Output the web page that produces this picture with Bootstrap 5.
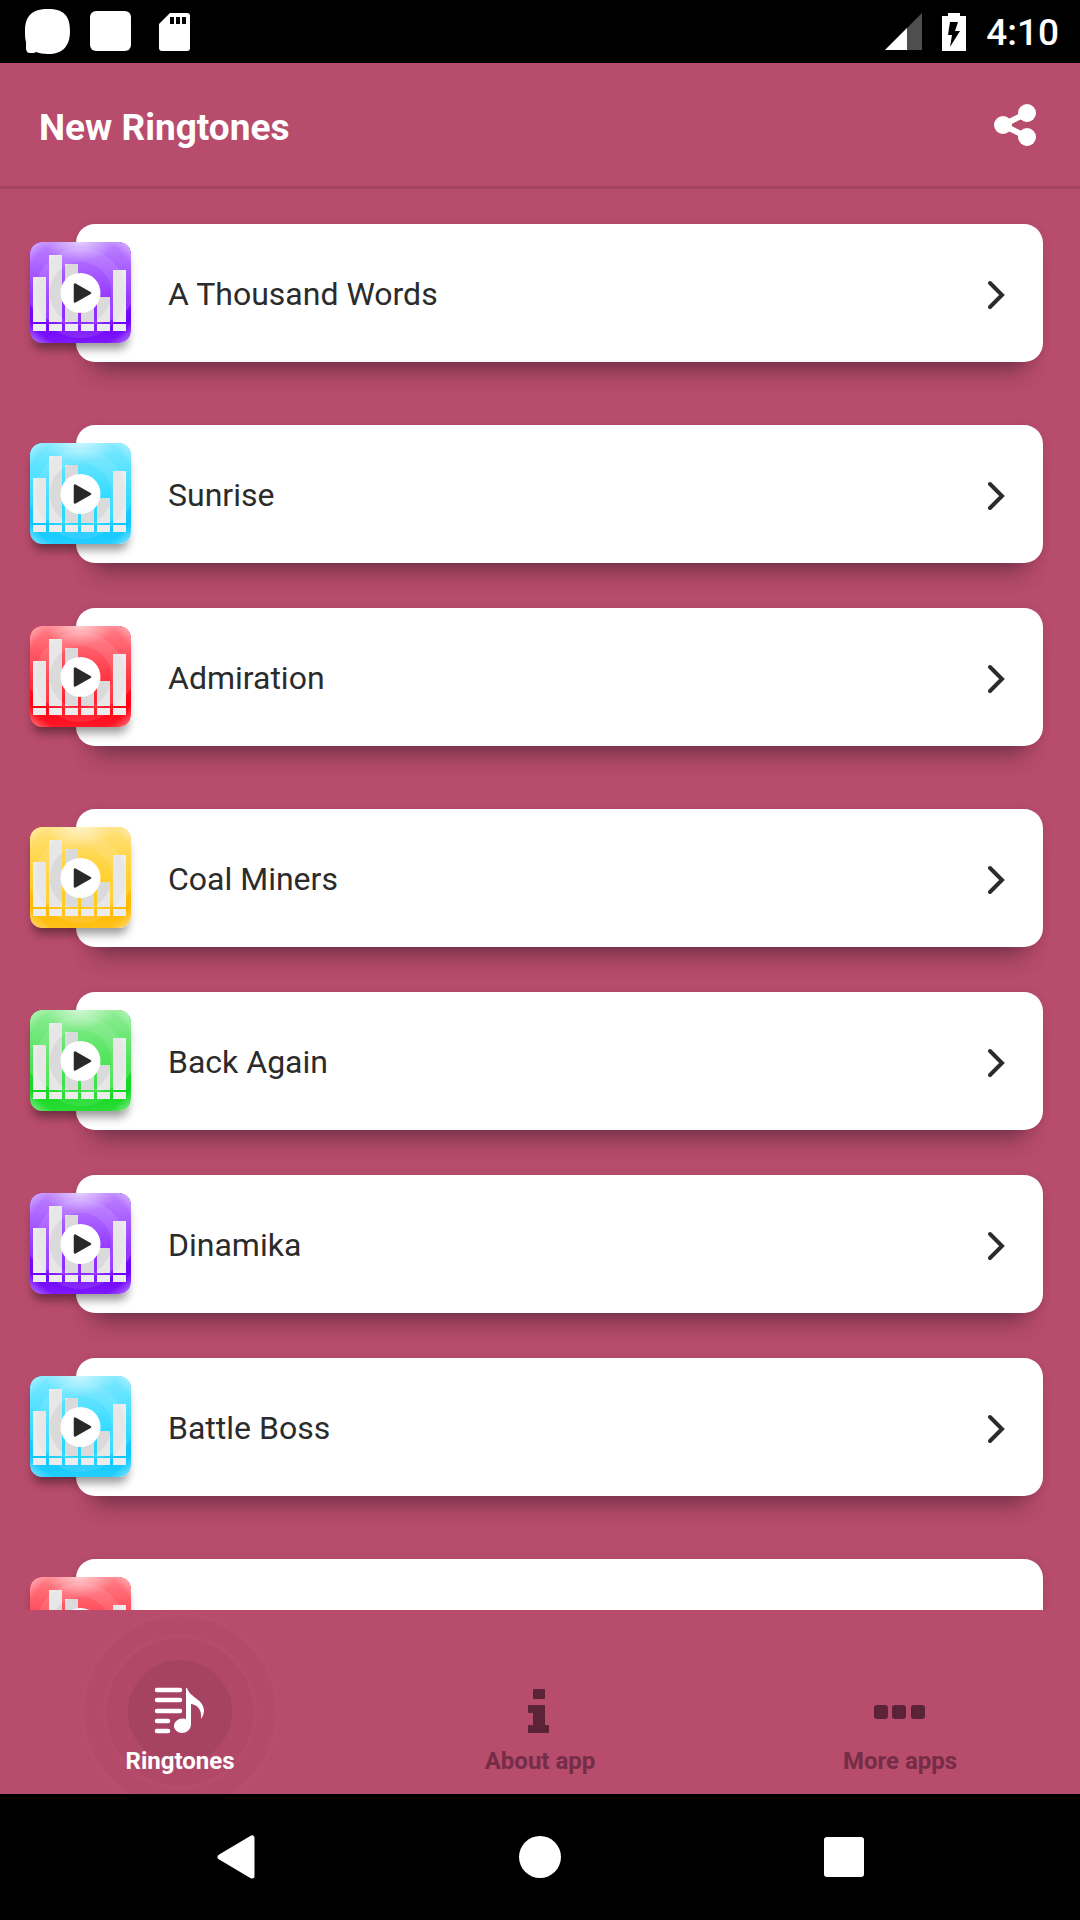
<!DOCTYPE html>
<html lang="en">
<head>
<meta charset="utf-8">
<meta name="viewport" content="width=device-width, initial-scale=1">
<title>New Ringtones</title>
<link href="https://cdn.jsdelivr.net/npm/bootstrap@5.3.0/dist/css/bootstrap.min.css" rel="stylesheet">
<style>
  :root { --rose: #b74c6c; --ink: #2b2b2b; }
  body { font-family: Roboto, "Liberation Sans", sans-serif; background: var(--rose); color: var(--ink); }
  svg { display: block; flex: none; }
  .status-bar { height: 63px; padding: 0 21px 0 25px; }
  .status-left { gap: 20px; }
  .status-right { gap: 20px; }
  .clock { font-size: 37px; line-height: 40px; font-weight: 500; padding-top: 3px; }
  .app-header { height: 126px; padding: 0 37px 0 39px; border-bottom: 3px solid #a64362; }
  .app-title { font-size: 37px; line-height: 44px; font-weight: 700; padding-top: 6px; }
  .tone-list { padding: 35px 37px 0 76px; }
  .tone-row { margin-bottom: 45px; }
  .tone-row.section-end { margin-bottom: 63px; }
  .tone-link { height: 138px; border-radius: 19px; color: var(--ink); padding-right: 37px;
    box-shadow: 0 26px 22px -18px rgba(40, 20, 30, .45), 0 2px 10px rgba(60, 20, 35, .1); }
  .tone-tile { width: 101px; height: 101px; margin: 0 37px 2px -46px; border-radius: 12px;
    box-shadow: 0 9px 10px -3px rgba(0, 0, 0, .4); }
  .tone-name { font-size: 32px; line-height: 40px; padding-top: 2px; }
  .chevron { margin-top: 4px; }
  .violet { --base: #8c28ff; --deep: #7000fb; }
  .cyan { --base: #20d8ff; --deep: #0cc8ff; }
  .red { --base: #ff2030; --deep: #ff0010; }
  .yellow { --base: #ffcb18; --deep: #ffba00; }
  .green { --base: #3ce048; --deep: #12d820; }
  .tab-bar { height: 184px; }
  .tab-link { padding-top: 76px; color: #752d47; }
  .tab-link.active { color: #fff; }
  .tab-icon { width: 52px; height: 48px; color: #5a2338; }
  .active .tab-icon { color: #fff; }
  .tab-text { font-size: 24px; line-height: 28px; font-weight: 700; margin-top: 13px; }
  .ripple { left: 50%; top: 0; transform: translateX(-50%); }
  .system-nav { height: 126px; padding: 0 84px; }
</style>
<script src="https://cdn.jsdelivr.net/npm/bootstrap@5.3.0/dist/js/bootstrap.bundle.min.js"></script>
</head>
<body>
<svg width="0" height="0" class="position-absolute" aria-hidden="true">
  <defs>
    <linearGradient id="sheen" x1="0" y1="0" x2="0" y2="1">
      <stop offset="0" stop-color="#fff" stop-opacity=".42"/>
      <stop offset=".55" stop-color="#fff" stop-opacity=".08"/>
      <stop offset=".8" stop-color="#fff" stop-opacity="0"/>
      <stop offset="1" stop-color="#fff" stop-opacity=".1"/>
    </linearGradient>
    <radialGradient id="glow">
      <stop offset="0" stop-color="#fff" stop-opacity=".6"/>
      <stop offset="1" stop-color="#fff" stop-opacity="0"/>
    </radialGradient>
    <radialGradient id="edge" cx=".5" cy=".5" r=".72">
      <stop offset=".78" stop-color="#fff" stop-opacity="0"/>
      <stop offset="1" stop-color="#fff" stop-opacity=".5"/>
    </radialGradient>
    <clipPath id="tile-clip"><rect width="101" height="101" rx="12"/></clipPath>
    <clipPath id="bars-clip"><path d="M3 35h13v45H3zM19 13h13v67H19zM35 22h13v58H35zM51 48h13v32H51zM67 55h13v25H67zM83 28h13v52H83z"/></clipPath>
    <symbol id="tile" viewBox="0 0 101 101">
      <g clip-path="url(#tile-clip)">
        <rect width="101" height="101" fill="var(--deep)"/>
        <path d="M0 0H101V62C94 76 75 83 50.500 83S7 76 0 62Z" fill="var(--base)"/>
        <rect width="101" height="101" fill="url(#sheen)"/>
        <circle cx="50.500" cy="51" r="38" fill="none" stroke="#fff" stroke-width="14" opacity=".1"/>
        <path d="M3 35h13v45H3zM19 13h13v67H19zM35 22h13v58H35zM51 48h13v32H51zM67 55h13v25H67zM83 28h13v52H83zM3 82h13v7H3zM19 82h13v7H19zM35 82h13v7H35zM51 82h13v7H51zM67 82h13v7H67zM83 82h13v7H83z" fill="#ececec"/>
        <g clip-path="url(#bars-clip)" fill="#777">
          <circle cx="50.500" cy="51" r="45" opacity=".04"/>
          <circle cx="50.500" cy="51" r="31" opacity=".11"/>
        </g>
        <rect width="101" height="101" fill="url(#edge)"/>
        <ellipse cx="50" cy="0" rx="36" ry="19" fill="url(#glow)"/>
      </g>
      <circle cx="50.500" cy="51" r="20" fill="#fff"/>
      <path d="M45 42.500V59.500L60 51Z" fill="#292929" stroke="#292929" stroke-width="2.500" stroke-linejoin="round"/>
    </symbol>
    <symbol id="next" viewBox="0 0 20 30">
      <path d="M4 3L16 15L4 27" fill="none" stroke="#2b2b2b" stroke-width="4" stroke-linecap="round"/>
    </symbol>
  </defs>
</svg>

<div class="vh-100 d-flex flex-column overflow-hidden">
  <div class="status-bar bg-black text-white d-flex align-items-center justify-content-between flex-shrink-0">
    <div class="status-left d-flex align-items-center">
      <svg width="45" height="45" viewBox="0 0 45 45" fill="#fff"><path d="M23 0C39 0 45 7 45 22S38 45 23 45C18 45 14 44 11 43L9 44H5Q1 44 1 39V33C0 30 0 26 0 22C0 7 7 0 23 0Z"/></svg>
      <svg width="41" height="41" viewBox="0 0 41 41" fill="#fff"><rect width="41" height="40" rx="6"/></svg>
      <svg class="ms-2" width="31" height="38" viewBox="0 0 31 38"><path d="M11 0H28Q31 0 31 3V35Q31 38 28 38H3Q0 38 0 35V11Z" fill="#fff"/><path d="M11 4h4v7h-4zM17 4h4v7h-4zM23 4h4v7h-4z"/></svg>
    </div>
    <div class="status-right d-flex align-items-center">
      <svg width="37" height="37" viewBox="0 0 37 37"><path d="M37 0V37H0Z" fill="#4e4e4e"/><path d="M22 15V37H0Z" fill="#fff"/></svg>
      <svg width="24" height="38" viewBox="0 0 24 38"><path d="M6 0H18V3H24V38H0V3H6Z" fill="#fff"/><path d="M8 9H16L13 18H18L8 34L10 22H6Z" fill="#000"/></svg>
      <span class="clock">4:10</span>
    </div>
  </div>

  <header class="app-header d-flex align-items-center justify-content-between flex-shrink-0">
    <h1 class="app-title text-white m-0">New Ringtones</h1>
    <button type="button" class="btn p-0 border-0" aria-label="Share">
      <svg width="56" height="42" viewBox="-7 0 56 42" fill="#fff"><path d="M33 9L9 21L33 33" fill="none" stroke="#fff" stroke-width="6"/><circle cx="9" cy="21" r="9"/><circle cx="33" cy="9" r="9"/><circle cx="33" cy="33" r="9"/></svg>
    </button>
  </header>

  <main class="flex-fill overflow-hidden">
    <ul class="tone-list list-unstyled m-0">
      <li class="tone-row section-end"><a href="#" class="tone-link bg-white d-flex align-items-center text-decoration-none"><svg class="tone-tile violet"><use href="#tile"/></svg><span class="tone-name flex-fill">A Thousand Words</span><svg class="chevron" width="20" height="30"><use href="#next"/></svg></a></li>
      <li class="tone-row"><a href="#" class="tone-link bg-white d-flex align-items-center text-decoration-none"><svg class="tone-tile cyan"><use href="#tile"/></svg><span class="tone-name flex-fill">Sunrise</span><svg class="chevron" width="20" height="30"><use href="#next"/></svg></a></li>
      <li class="tone-row section-end"><a href="#" class="tone-link bg-white d-flex align-items-center text-decoration-none"><svg class="tone-tile red"><use href="#tile"/></svg><span class="tone-name flex-fill">Admiration</span><svg class="chevron" width="20" height="30"><use href="#next"/></svg></a></li>
      <li class="tone-row"><a href="#" class="tone-link bg-white d-flex align-items-center text-decoration-none"><svg class="tone-tile yellow"><use href="#tile"/></svg><span class="tone-name flex-fill">Coal Miners</span><svg class="chevron" width="20" height="30"><use href="#next"/></svg></a></li>
      <li class="tone-row"><a href="#" class="tone-link bg-white d-flex align-items-center text-decoration-none"><svg class="tone-tile green"><use href="#tile"/></svg><span class="tone-name flex-fill">Back Again</span><svg class="chevron" width="20" height="30"><use href="#next"/></svg></a></li>
      <li class="tone-row"><a href="#" class="tone-link bg-white d-flex align-items-center text-decoration-none"><svg class="tone-tile violet"><use href="#tile"/></svg><span class="tone-name flex-fill">Dinamika</span><svg class="chevron" width="20" height="30"><use href="#next"/></svg></a></li>
      <li class="tone-row section-end"><a href="#" class="tone-link bg-white d-flex align-items-center text-decoration-none"><svg class="tone-tile cyan"><use href="#tile"/></svg><span class="tone-name flex-fill">Battle Boss</span><svg class="chevron" width="20" height="30"><use href="#next"/></svg></a></li>
      <li class="tone-row"><a href="#" class="tone-link bg-white d-flex align-items-center text-decoration-none"><svg class="tone-tile red"><use href="#tile"/></svg></a></li>
    </ul>
  </main>

  <nav class="tab-bar row g-0 flex-shrink-0 overflow-hidden">
    <a href="#" class="tab-link active col-4 position-relative d-flex flex-column align-items-center text-decoration-none" aria-current="page">
      <svg class="ripple position-absolute" width="204" height="204" viewBox="0 0 204 204"><g fill="#5a2338"><circle cx="102" cy="102" r="97" opacity=".03"/><circle cx="102" cy="102" r="75" opacity=".03"/><circle cx="102" cy="102" r="52" opacity=".12"/></g><g fill="none" stroke="#d06080" stroke-width="4" opacity=".12"><circle cx="102" cy="102" r="97"/><circle cx="102" cy="102" r="75"/></g></svg>
      <svg class="tab-icon position-relative" viewBox="0 0 52 48"><path d="M3 4H26M3 14H26M3 25H26M3 35H14M3 45H14" stroke="currentColor" stroke-width="4.500" stroke-linecap="round"/><path d="M32 2H33C36 12 50 13 50 25Q50 29 47 33C48 24 44 19 37 18V38C37 44 32 47 28 47C23 47 20 43 20 40C20 35 26 31 32 33Z" fill="currentColor"/></svg>
      <span class="tab-text position-relative">Ringtones</span>
    </a>
    <a href="#" class="tab-link col-4 d-flex flex-column align-items-center text-decoration-none">
      <svg class="tab-icon" viewBox="0 0 52 48" fill="currentColor"><rect x="19" y="3" width="12" height="10" rx="1"/><path d="M15 19H30Q31 19 31 20V39H34Q35 39 35 40V46Q35 47 34 47H15Q14 47 14 46V40Q14 39 15 39H19V27H15Q14 27 14 26V20Q14 19 15 19Z"/></svg>
      <span class="tab-text">About app</span>
    </a>
    <a href="#" class="tab-link col-4 d-flex flex-column align-items-center text-decoration-none">
      <svg class="tab-icon" viewBox="0 0 52 48" fill="currentColor"><rect x="0" y="19" width="14" height="14" rx="3"/><rect x="18" y="19" width="14" height="14" rx="3"/><rect x="37" y="19" width="14" height="14" rx="3"/></svg>
      <span class="tab-text">More apps</span>
    </a>
  </nav>

  <div class="system-nav bg-black d-flex flex-shrink-0">
    <button type="button" class="btn border-0 p-0 flex-fill w-100 d-flex align-items-center justify-content-center" aria-label="Back"><svg width="38" height="44" viewBox="0 0 38 44"><path d="M35 3V41L3 22Z" fill="#fff" stroke="#fff" stroke-width="5" stroke-linejoin="round"/></svg></button>
    <button type="button" class="btn border-0 p-0 flex-fill w-100 d-flex align-items-center justify-content-center" aria-label="Home"><svg width="42" height="42" viewBox="0 0 42 42"><circle cx="21" cy="21" r="21" fill="#fff"/></svg></button>
    <button type="button" class="btn border-0 p-0 flex-fill w-100 d-flex align-items-center justify-content-center" aria-label="Recent apps"><svg width="40" height="40" viewBox="0 0 40 40"><rect width="40" height="40" rx="3" fill="#fff"/></svg></button>
  </div>
</div>
</body>
</html>
